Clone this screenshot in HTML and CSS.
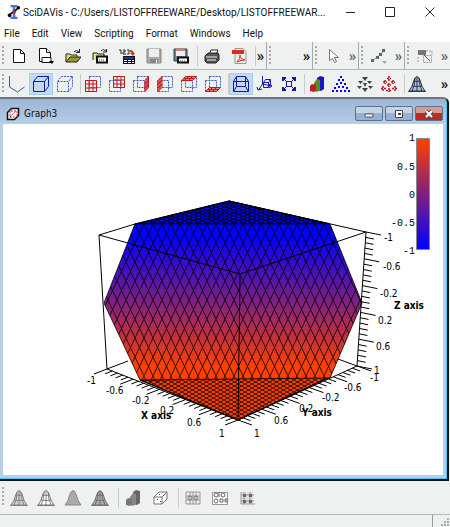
FILE: index.html
```
<!DOCTYPE html>
<html lang="en">
<head>
  <meta charset="UTF-8" />
  <meta name="viewport" content="width=device-width, initial-scale=1.0"/>
  <title>SciDAVis</title>
  <link rel="stylesheet" href="styles.css">
</head>
<body>
  <svg class="defs" aria-hidden="true">
    <symbol id="page" viewBox="0 0 16 16"><path d="M2.5 1.500h7l4 4v9h-11z" fill="#fff" stroke="#111"/><path d="M9.500 1.500v4h4" fill="none" stroke="#111"/></symbol>
    <symbol id="box" viewBox="0 0 18 18"><path d="M1.500 5.500h11v11h-11zM5.500 1.500h11v11h-11z" /></symbol>
    <symbol id="cube" viewBox="0 0 18 18"><path d="M1.500 6.500h11v10h-11zM1.500 6.500l4-5h11l-4 5M16.500 1.500v10l-4 5"/></symbol>
    <symbol id="bell" viewBox="0 0 18 18">
      <path d="M1 16Q4 13 6 5Q9-2 12 5Q14 13 17 16z" stroke-width=".9"/>
      <path d="M0 16.500h18M7 3Q7 11 4 16M9 2v14M11 3q0 7 3 13M6 6q3 1 6 0M4 11q5 1 10 0" fill="none" stroke-width=".8"/>
    </symbol>
    <symbol id="bars" viewBox="0 0 18 18">
      <path class="b1" d="M9 3l3-2 4 1v12l-3 2-4-1z"/>
      <path class="b2" d="M6 8l3-4 3 1v10l-3 2-3-1z"/>
      <path class="b3" d="M2 11l2-2 4 1v5l-2 2-4-1z"/>
    </symbol>
    <symbol id="scatter" viewBox="0 0 18 18"><path d="M8 1h2v2H8zM6 4h2v2H6zM10 4h2v2h-2zM8 7h2v2H8zM4 8h2v2H4zM12 8h2v2h-2zM2 12h2v2H2zM6 11h2v2H6zM10 11h2v2h-2zM14 12h2v2h-2zM0 15h2v2H0zM4 15h2v2H4zM8 15h2v2H8zM12 15h2v2h-2zM16 15h2v2h-2z"/></symbol>
    <symbol id="cones" viewBox="0 0 18 18"><path d="M6 2h6L9 6zM2 6h5L4.500 9zM11 6h5l-2.500 3zM7 8h4L9 12zM1 11h5l-2.500 3zM12 11h5l-2.500 3zM6 13h6l-3 4z"/></symbol>
    <symbol id="crosses" viewBox="0 0 18 18"><path d="M9 1v5M7 3.500h4M5 5v4M3 7h4M13 5v4M11 7h4M9 8v4M7 10h4M3 11v5M1 13.500h5M15 11v5M12 13.500h5M9 13v4M6 15.500h6" stroke-dasharray="2 1" stroke-width="1.500"/></symbol>
  </svg>

  <header class="titlebar">
    <svg class="logo" viewBox="0 0 16 16"><path d="M4 1h8M8 1v14M4 15h8" stroke="#4b78d8" stroke-width="3" fill="none"/><path d="M1 12l5-3 4-3 4-4" stroke="#111" stroke-width="2" fill="none"/><circle cx="3" cy="12" r="2"/><circle cx="13" cy="3" r="2"/><circle cx="8" cy="8" r="2" fill="#b52222"/></svg>
    <h1>SciDAVis - C:/Users/LISTOFFREEWARE/Desktop/LISTOFFREEWAR...</h1>
    <div class="window-buttons">
      <button aria-label="Minimize"><svg viewBox="0 0 10 10"><path d="M1 5.500h9"/></svg></button>
      <button aria-label="Maximize"><svg viewBox="0 0 10 10"><path d="M.5.5h9v9h-9z"/></svg></button>
      <button aria-label="Close"><svg viewBox="0 0 10 10"><path d="M.5.5l9 9M9.500.5l-9 9"/></svg></button>
    </div>
  </header>

  <nav class="menu">
    <a href="#">File</a>
    <a href="#">Edit</a>
    <a href="#">View</a>
    <a href="#">Scripting</a>
    <a href="#">Format</a>
    <a href="#">Windows</a>
    <a href="#">Help</a>
  </nav>

  <div class="toolbars">
    <div class="toolbar file-bar">
      <button aria-label="New project"><svg><use href="#page"/></svg></button>
      <button aria-label="New"><svg viewBox="0 0 16 16"><path d="M1.500.5h7l4 4v9h-11z" fill="#fff" stroke="#111"/><path d="M8.500.5v4h4M4 9.500h9v5H4z" fill="#fff" stroke="#111"/><path d="M11 13h5l-2 3z"/></svg></button>
      <button aria-label="Open"><svg viewBox="0 0 16 16"><path d="M1 14V6h4l1 1h6v3" fill="#e4e070" stroke="#222"/><path d="M1 14l4-5h11l-4 5z" fill="#9a9a28" stroke="#222"/><path d="M9 4q2-3 5 0M14.500 1v3.500H11" fill="none" stroke="#222"/></svg></button>
      <button aria-label="Open template"><svg viewBox="0 0 16 16"><path d="M1 12V5h4l1 1h6v3" fill="#e4e070" stroke="#222"/><path d="M5 8.500h10v6H5z" fill="#fff" stroke="#111" stroke-width="2"/><path d="M7 12h6" stroke="#333" stroke-dasharray="1 1"/><path d="M9 3q2-3 5 0M14.500 1v3H11" fill="none" stroke="#222"/></svg></button>
      <button aria-label="Import ASCII"><svg viewBox="0 0 16 16"><path d="M0 2h2v4M4 2h2v2H4v2h3M8 2h2v4H8" stroke="#222" fill="none"/><path d="M11 3q3 0 3 3" stroke="#e03010" stroke-width="2" fill="none"/><path d="M11 5h5l-2 3z" fill="#e03010"/><path d="M4 8h12v8H4z" fill="#111"/><path d="M5 12h3v1H5zM9 12h3v1H9zM13 12h2v1h-2zM5 14h3v1H5zM9 14h3v1H9zM13 14h2v1h-2z" fill="#fff"/><path d="M5 9h10v2H5z" fill="#2030b0"/></svg></button>
      <button aria-label="Save" disabled><svg viewBox="0 0 16 16"><path d="M1 1h14v14H1z" fill="#aaa" stroke="#888"/><path d="M3 1h10v8H3z" fill="#eee"/><path d="M4 11h8v4H4z" fill="#888"/><path d="M10 12h1v3h-1z" fill="#fff"/></svg></button>
      <button aria-label="Save template"><svg viewBox="0 0 16 16"><path d="M1 1h13v12H1z" fill="#68809a" stroke="#344"/><path d="M3 1h9v7H3z" fill="#eee"/><path d="M3 2h9" stroke="#d77" stroke-width="2"/><path d="M5 9.500h10v5H5z" fill="#fff" stroke="#111" stroke-width="2"/><path d="M7 13h6" stroke="#333" stroke-dasharray="1 1"/></svg></button>
      <i class="sep"></i>
      <button aria-label="Print"><svg viewBox="0 0 16 16"><path d="M5 7l2-5h7l-2 5" fill="#fff" stroke="#222"/><path d="M1 8l3-3h10l1 2v5l-3 3H3l-2-2z" fill="#555" stroke="#222"/><path d="M2 9h11M3 12h9" stroke="#eee"/></svg></button>
      <button aria-label="Export PDF"><svg viewBox="0 0 16 16"><path d="M4 .5h8l3 3v12H4z" fill="#eee" stroke="#999"/><path d="M1 2h12v4H1z" fill="#dc2b1c"/><path d="M6 14q4-4 3-7q0 4 5 5q-4 0-8 2" stroke="#d8331f" fill="none"/></svg></button>
      <i class="sep"></i>
      <button class="more" aria-label="More file tools">»</button>
    </div>
    <div class="toolbar side-bar"><button class="more" aria-label="More edit tools">»</button></div>
    <div class="toolbar side-bar">
      <button aria-label="Pointer"><svg viewBox="0 0 16 16"><path d="M4.500 1.500v11l3-2 2 4 2-1-2-4h4z" fill="#fff" stroke="#777"/></svg></button>
      <button class="more dim" aria-label="More plot tools">»</button>
    </div>
    <div class="toolbar side-bar">
      <button aria-label="Add curve"><svg viewBox="0 0 16 16"><path d="M1 13l4-3 4-3 4-5" stroke="#888" fill="none"/><path d="M0 11h3v3H0zM5 8h3v3H5zM8 5h3v3H8zM11 1h3v3h-3z" fill="#666"/><path d="M11 13h5l-2.500 3z" fill="#aaa"/></svg></button>
      <button class="more dim" aria-label="More curve tools">»</button>
    </div>
    <div class="toolbar side-bar">
      <button aria-label="Duplicate"><svg viewBox="0 0 16 16"><path d="M1 2h8v5H1z" fill="#777"/><path d="M6.500 7.500h8v7h-8zM1 9v6M9 3h6v4" fill="none" stroke="#999" stroke-dasharray="2 1"/><path d="M7 7l6 6" stroke="#555"/></svg></button>
      <button class="more dim" aria-label="More column tools">»</button>
    </div>
  </div>

  <div class="toolbar plot-bar">
    <button aria-label="Axes"><svg class="blue" viewBox="0 0 18 18"><path d="M1.500 1v11l8 5 7-5"/></svg></button>
    <button class="active" aria-label="Box"><svg class="blue strong"><use href="#cube"/></svg></button>
    <button aria-label="No box"><svg class="blue dots"><use href="#cube"/></svg></button>
    <i class="sep"></i>
    <button aria-label="Front grid"><svg viewBox="0 0 18 18"><use class="blue dots" href="#box"/><path class="red" d="M1.500 5.500h11v11h-11zM5 5.500v11M9 5.500v11M1.500 9h11M1.500 13h11"/></svg></button>
    <button aria-label="Back grid"><svg viewBox="0 0 18 18"><use class="blue dots" href="#box"/><path class="red" d="M5.500 1.500h11v11h-11zM9 1.500v11M13 1.500v11M5.500 5h11M5.500 9h11"/></svg></button>
    <button aria-label="Right grid"><svg viewBox="0 0 18 18"><use class="blue dots" href="#box"/><path class="red wide" d="M13 5.500l3.500-4v11l-3.500 4zM13 9l4-4M13 13l4-4M15 3v11"/></svg></button>
    <button aria-label="Left grid"><svg viewBox="0 0 18 18"><use class="blue dots" href="#box"/><path class="red wide" d="M2 5.500l4-4v11l-4 4zM2 9l4-4M2 13l4-4M4 3v11"/></svg></button>
    <button aria-label="Ceiling grid"><svg viewBox="0 0 18 18"><use class="blue dots" href="#box"/><path class="red wide" d="M1.500 5.500l4-4h11l-4 4zM5 5l4-4M9 5l4-4M3 3.500h12"/></svg></button>
    <button aria-label="Floor grid"><svg viewBox="0 0 18 18"><use class="blue dots" href="#box"/><path class="red wide" d="M1.500 16.500l4-4h11l-4 4zM5 16l4-4M9 16l4-4M3 14.500h12"/></svg></button>
    <i class="sep"></i>
    <button class="active" aria-label="Perspective"><svg class="blue strong" viewBox="0 0 18 18"><path d="M4.500 1.500h9v10h-9zM1.500 6.500h15v10h-15zM1.500 6.500l3-5M16.500 6.500l-3-5M1.500 16.500l3-5M16.500 16.500l-3-5"/></svg></button>
    <button aria-label="Reset rotation"><svg class="blue strong" viewBox="0 0 18 18"><path d="M6.500 1v8l-4 6M6.500 9l9 2M7.500 7.500h5v5h-5zM7.500 7.500l2-3h5l-2 3M14.500 4.500v5l-2 3M1 12l1 3 4-1M13 9l3 2-3 2"/></svg></button>
    <button aria-label="Fit frame"><svg class="blue strong" viewBox="0 0 18 18"><path d="M6.500 6.500h5v5h-5zM3 3l4 4M15 3l-4 4M3 15l4-4M15 15l-4-4"/><path d="M3 6V3h3M12 3h3v3M3 12v3h3M12 15h3v-3" stroke-width="2"/></svg></button>
    <i class="sep"></i>
    <button aria-label="Bars"><svg class="color-bars"><use href="#bars"/></svg></button>
    <button aria-label="Scatter"><svg fill="#0808e8"><use href="#scatter"/></svg></button>
    <button aria-label="Cones"><svg fill="#444"><use href="#cones"/></svg></button>
    <button aria-label="Crosses"><svg stroke="#b01818"><use href="#crosses"/></svg></button>
    <i class="sep"></i>
    <button aria-label="Surface"><svg fill="#a4bcee" stroke="#222"><use href="#bell"/></svg></button>
    <button class="more" aria-label="More 3D tools">»</button>
  </div>

  <main class="graph-window">
    <div class="graph-title">
      <svg viewBox="0 0 14 14"><path d="M1.500 5.500l4-4h7v7l-4 4h-7z" fill="#fff" stroke="#111" stroke-width="1.500"/><path d="M4 10h5M4 4v7M5 4h6v5M4 10l6-6" fill="none" stroke="#c33" stroke-dasharray="2 1"/></svg>
      <h2>Graph3</h2>
      <button aria-label="Minimize graph"><svg viewBox="0 0 10 10"><path d="M1 5h8v3H1z" fill="#fff" stroke="#556"/></svg></button>
      <button aria-label="Maximize graph"><svg viewBox="0 0 10 10"><path d="M1.500 1.500h7v7h-7z" fill="#fff" stroke="#445"/><path d="M4 4h3v2H4z" fill="#445"/></svg></button>
      <button class="close" aria-label="Close graph"><svg viewBox="0 0 10 10"><path d="M2 2l6 6M8 2L2 8" stroke="#555" stroke-width="4"/><path d="M2 2l6 6M8 2L2 8" stroke="#fff" stroke-width="2"/></svg></button>
    </div>
    <svg class="plot" viewBox="3 124 440 351" role="img" aria-label="3D surface plot">
      <defs>
        <linearGradient id="surface" gradientUnits="userSpaceOnUse" x1="0" y1="236" x2="0" y2="368">
          <stop offset="0" stop-color="#0000ff"/>
          <stop offset=".5" stop-color="#7f2080"/>
          <stop offset="1" stop-color="#ff4000"/>
        </linearGradient>
        <linearGradient id="scale" x1="0" y1="0" x2="0" y2="1">
          <stop offset="0" stop-color="#ff4000"/>
          <stop offset="1" stop-color="#0000ff"/>
        </linearGradient>
        <pattern id="mesh" patternUnits="userSpaceOnUse" x="135" y="224" width="9" height="19"><path d="M0 0l9 19M9 0l-9 19" stroke="#000" stroke-width=".8"/></pattern>
        <pattern id="meshTop" patternUnits="userSpaceOnUse" width="9" height="3"><path d="M0 0l9 3M9 0l-9 3" stroke="#000" stroke-width=".9"/></pattern>
        <pattern id="meshFloor" patternUnits="userSpaceOnUse" width="7" height="4"><path d="M0 0l7 4M7 0l-7 4" stroke="#000" stroke-width=".8"/></pattern>
      </defs>
      <g stroke="#000">
        <path d="M135 224L229 201L330 224z" fill="#0000ff"/>
        <path d="M135 224L229 201L330 224z" fill="url(#meshTop)"/>
        <path d="M140 380L330 377L238 420z" fill="#ff4000"/>
        <path d="M140 380L330 377L238 420z" fill="url(#meshFloor)"/>
        <path d="M135 224H330L362 303L330 378L140 380L104 303z" fill="url(#surface)" stroke="none"/>
        <path d="M135 224H330L362 303L330 378L140 380L104 303z" fill="url(#mesh)" stroke-width=".8"/>
        <path d="M229 201L366 232L240 274L99 235L135 224M240 274L238 420M99 235L107 369L238 420L357 366L366 232M107 369l21-8M357 366l-19-7" fill="none"/>
      </g>
      <path id="ticks" stroke="#000" fill="none"/>
      <g class="labels">
        <text x="87" y="384">-1</text><text x="106" y="394">-0.6</text><text x="132" y="404">-0.2</text>
        <text x="160" y="414">0.2</text><text x="187" y="426">0.6</text><text x="219" y="437">1</text>
        <text x="254" y="437">1</text><text x="274" y="424">0.6</text><text x="299" y="412">0.2</text>
        <text x="322" y="401">-0.2</text><text x="344" y="391">-0.6</text><text x="370" y="381">-1</text>
        <text x="384" y="241">-1</text><text x="383" y="270">-0.6</text><text x="380" y="297">-0.2</text>
        <text x="378" y="324">0.2</text><text x="376" y="350">0.6</text><text x="374" y="374">1</text>
      </g>
      <g class="labels axis">
        <text x="141" y="419">X axis</text><text x="302" y="416">Y axis</text><text x="394" y="309">Z axis</text>
      </g>
      <path d="M416.500 138.500h13v111h-13z" fill="url(#scale)" stroke="#888"/>
      <g class="scale">
        <text x="415" y="141">1</text><text x="415" y="170">0.5</text><text x="415" y="198">0</text>
        <text x="415" y="226">-0.5</text><text x="415" y="254">-1</text>
      </g>
    </svg>
  </main>

  <div class="toolbar surface-bar">
    <button aria-label="Hidden line"><svg fill="#ccc" stroke="#777"><use href="#bell"/></svg></button>
    <button aria-label="Wireframe"><svg fill="#fff" stroke="#666"><use href="#bell"/></svg></button>
    <button aria-label="Polygons"><svg viewBox="0 0 18 18"><path d="M1 16Q4 13 6 5Q9-2 12 5Q14 13 17 16z" fill="#aaa" stroke="#888"/></svg></button>
    <button aria-label="Mesh"><svg fill="#aaa" stroke="#666"><use href="#bell"/></svg></button>
    <i class="sep"></i>
    <button aria-label="Bar style"><svg class="grey-bars"><use href="#bars"/></svg></button>
    <button aria-label="Scatter box"><svg viewBox="0 0 18 18"><path d="M3 8l5-5h8v7l-5 5H3zM3 8h8v7M11 8l5-5" fill="#fff" stroke="#777"/><path d="M6 10h1v1H6zM9 12h1v1H9zM12 6h1v1h-1zM8 5h1v1H8z" fill="#555"/></svg></button>
    <i class="sep"></i>
    <button aria-label="Floor data"><svg viewBox="0 0 18 18"><path d="M2 3h14v12H2zM6 3v12M9 3v12M12 3v12M2 7h14M2 11h14" fill="#eee" stroke="#999"/><circle cx="6" cy="9" r="2" fill="none" stroke="#777"/><circle cx="12" cy="9" r="2" fill="none" stroke="#777"/></svg></button>
    <button aria-label="Floor isolines"><svg viewBox="0 0 18 18" fill="#fff" stroke="#666"><path d="M1.500 3.500h15v12h-15z" stroke="#999"/><circle cx="5" cy="6" r="2"/><circle cx="12" cy="6" r="2"/><circle cx="5" cy="12" r="2"/><path d="M9 10h3v3H9zM14 10h2v3h-2zM8 3v5"/></svg></button>
    <button aria-label="Empty floor"><svg viewBox="0 0 18 18"><path d="M3 3h12v12H3z" fill="#ddd"/><path d="M3 3v12h14M6 3v12M12 3v12M3 6h13M3 12h13" stroke="#999" fill="none"/><path d="M5 5h3v3H5zM11 5h3v3h-3zM5 11h3v3H5zM11 11h3v3h-3z" fill="#666"/></svg></button>
  </div>
  <footer class="status"><div class="message"></div><svg viewBox="0 0 9 9"><path d="M6 0h2v2H6zM3 3h2v2H3zM6 3h2v2H6zM0 6h2v2H0zM3 6h2v2H3zM6 6h2v2H6z" fill="#aaa"/></svg></footer>

  <script src="plot.js"></script>
</body>
</html>
```
FILE: styles.css
```
* {
  box-sizing: border-box;
}
body {
  margin: 0;
  min-height: 100vh;
  display: flex;
  flex-direction: column;
  background: #eff0f0;
  font-family: Roboto, sans-serif;
  font-size: 10px;
  color: #111;
}
.defs {
  position: absolute;
  width: 0;
  height: 0;
}
button {
  padding: 0;
  border: 0;
  background: none;
  display: flex;
  align-items: center;
  justify-content: center;
  font-family: inherit;
}
h1, h2 {
  margin: 0;
  font-weight: normal;
}
.titlebar {
  height: 24px;
  padding-left: 7px;
  display: flex;
  align-items: center;
  background: #fff;
}
.logo {
  width: 14px;
  height: 14px;
  flex: none;
}
h1 {
  flex: 1;
  min-width: 0;
  margin-left: 2px;
  font-size: 10px;
  white-space: nowrap;
}
.window-buttons {
  display: flex;
}
.window-buttons button {
  width: 40px;
  height: 24px;
}
.window-buttons svg {
  width: 10px;
  height: 10px;
  fill: none;
  stroke: #222;
}
.menu {
  height: 18px;
  padding-left: 4px;
  display: flex;
  align-items: center;
  gap: 12px;
  background: #fff;
}
.menu a {
  color: #111;
  text-decoration: none;
}
.toolbars {
  display: flex;
}
.toolbar {
  height: 28px;
  padding-left: 5px;
  display: flex;
  align-items: center;
  border-bottom: 1px solid #b8b8b8;
  background: repeating-linear-gradient(#aaa 0 2px, #eff0f0 2px 4px) 2px 4px / 2px 20px no-repeat;
}
.toolbar svg {
  width: 18px;
  height: 18px;
}
.toolbars svg {
  width: 16px;
  height: 16px;
}
.file-bar {
  flex: 1;
}
.file-bar button {
  flex: 1;
}
.side-bar {
  width: 46px;
  padding-left: 12px;
  border-left: 1px solid #aaa;
}
.toolbar .more {
  flex: none;
  width: 9px;
  margin-left: auto;
  margin-right: 1px;
  font-size: 15px;
  font-weight: bold;
  color: #111;
}
.toolbar .dim {
  color: #666;
}
.sep {
  flex: none;
  width: 4px;
  height: 20px;
  border-right: 1px solid #ccc;
}
.plot-bar {
  height: 27px;
  border-bottom: 0;
}
.plot-bar button {
  width: 24px;
  height: 22px;
}
.plot-bar .active {
  background: #c4daf0;
  border: 1px solid #aacbea;
}
.blue {
  fill: none;
  stroke: #3c58c0;
}
.strong {
  stroke: #1717a8;
}
.dots {
  stroke-dasharray: 2 1;
}
.red {
  fill: none;
  stroke: #c01818;
}
.wide {
  fill: #e88;
}
.color-bars {
  --back: #1818c0;
  --middle: #5b8a25;
  --front: #c01c1c;
}
.grey-bars {
  --back: #666;
  --middle: #888;
  --front: #777;
}
.b1 {
  fill: var(--back);
}
.b2 {
  fill: var(--middle);
}
.b3 {
  fill: var(--front);
}
.graph-window {
  margin-right: 1px;
  padding: 0 4px 4px 3px;
  border-top: 2px solid #70757a;
  border-right: 2px solid #111;
  border-bottom: 2px solid #111;
  border-radius: 0 6px 0 0;
  box-shadow: inset -1px -1px #48c4f0;
  background: linear-gradient(#9bb6d4, #b8cfea 27px);
}
.graph-title {
  height: 25px;
  padding: 4px 0 0 3px;
  display: flex;
  align-items: center;
  gap: 2px;
}
.graph-title > svg {
  width: 14px;
  height: 14px;
}
.graph-title h2 {
  flex: 1;
  margin-left: 2px;
  font-family: "DejaVu Sans Condensed", "DejaVu Sans", sans-serif;
  font-size: 10px;
}
.graph-title button {
  width: 28px;
  height: 15px;
  border: 1px solid #60718c;
  border-radius: 2px;
  background: linear-gradient(#c4d4e8 50%, #98b1d0 50%);
}
.graph-title .close {
  background: linear-gradient(#d79a90 50%, #b82c24 50%);
}
.graph-title button svg {
  width: 10px;
  height: 10px;
}
.plot {
  display: block;
  width: 100%;
  background: #fff;
}
.labels {
  font-family: "DejaVu Sans Condensed", "DejaVu Sans", sans-serif;
  font-size: 10px;
}
.axis {
  font-weight: bold;
}
.scale {
  font-family: "Liberation Mono", monospace;
  font-size: 10px;
  text-anchor: end;
}
.surface-bar {
  height: 34px;
  background-position: 2px 6px;
}
.surface-bar button {
  width: 27px;
  height: 24px;
}
.surface-bar .sep {
  width: 6px;
}
.status {
  flex: 1;
  min-height: 12px;
  display: flex;
  align-items: flex-end;
  gap: 8px;
}
.status .message {
  flex: 1;
  align-self: stretch;
  border-right: 1px solid #999;
}
.status svg {
  width: 9px;
  height: 9px;
}
```
FILE: plot.js
```
// four minor ticks between two major ones
function axisTicks(x1, y1, x2, y2, dx, dy) {
  let d = '';
  for (let i = 0; i <= 25; i++) {
    const t = i / 25;
    const len = i % 5 === 0 ? 1 : 0.55;
    d += `M${x1 + (x2 - x1) * t} ${y1 + (y2 - y1) * t}l${dx * len} ${dy * len}`;
  }
  return d;
}

document.getElementById('ticks').setAttribute('d',
  axisTicks(107, 369, 238, 420, -13, 5) +
  axisTicks(238, 420, 357, 366, 14, 5) +
  axisTicks(366, 232, 357, 366, 15, 3));
```
